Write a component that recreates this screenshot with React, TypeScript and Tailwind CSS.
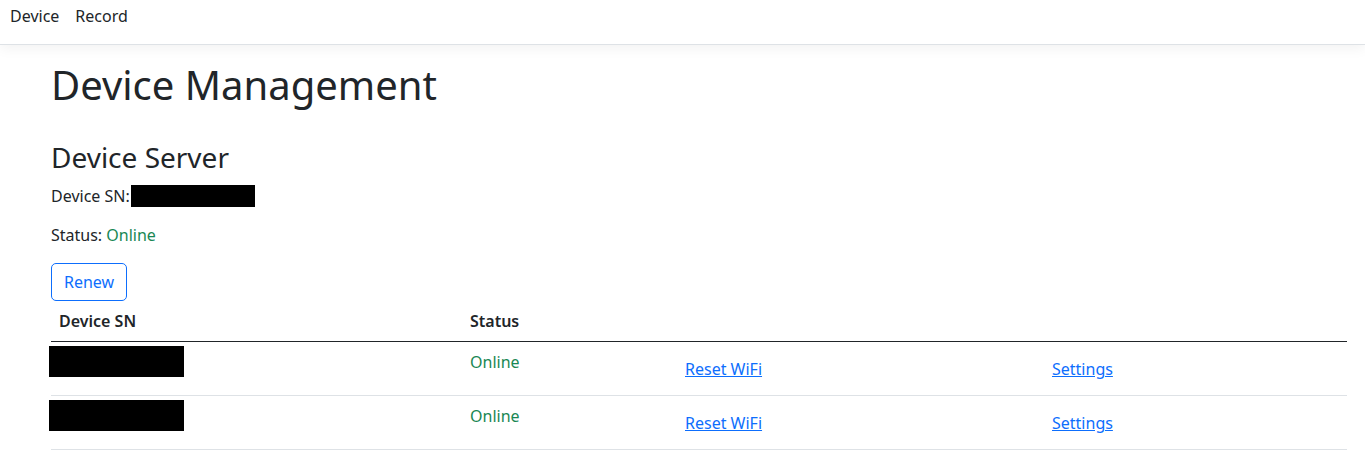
const font = { fontFamily: '"Noto Sans", "Open Sans", sans-serif' };

const rows = [0, 1];

export default function App() {
  return (
    <div className="min-h-[471px] bg-white text-[#212529]" style={font}>
      {/* Navbar */}
      <nav className="h-[45px] border-b border-[#dee2e6] bg-white shadow-[0_4px_12px_rgba(0,0,0,0.05)]">
        <div className="flex h-[32px] items-center gap-4 pl-[10px] text-[16px]">
          <a className="text-[#212529]">Device</a>
          <a className="text-[#212529]">Record</a>
        </div>
      </nav>

      <main className="pl-[51px] pr-[18px]">
        <h1 className="mt-[16px] text-[40px] leading-[48px] font-normal">Device Management</h1>

        <h3 className="mt-[31px] text-[28px] leading-[34px] font-normal">Device Server</h3>

        <div className="mt-[10px] flex items-center text-[16px] leading-6">
          <span>Device SN:</span>
          <span className="ml-[1px] inline-block h-[22px] w-[124px] bg-black" />
        </div>

        <p className="mt-[15px] text-[16px] leading-6">
          Status: <span className="text-[#198754]">Online</span>
        </p>

        <button className="mt-[16px] h-[38px] rounded-[5px] border border-[#0d6efd] px-[12px] text-[16px] text-[#0d6efd]">
          Renew
        </button>

        <table className="w-full border-collapse text-[16px] leading-6">
          <thead>
            <tr className="border-b border-[#212529]">
              <th className="w-[411px] px-2 py-2 text-left font-semibold">Device SN</th>
              <th className="w-[215px] px-2 py-2 text-left font-semibold">Status</th>
              <th className="w-[367px] px-2 py-2" />
              <th className="px-2 py-2" />
            </tr>
          </thead>
          <tbody>
            {rows.map((r) => (
              <tr key={r} className="border-b border-[#dee2e6]">
                <td className="h-[54px] align-top pt-[4px] pl-0">
                  <div className="-ml-[2px] h-[31px] w-[135px] bg-black" />
                </td>
                <td className="align-top px-2 pt-2 text-[#198754]">Online</td>
                <td className="align-top px-2 pt-[15px]">
                  <a className="text-[#0d6efd] underline">Reset WiFi</a>
                </td>
                <td className="align-top px-2 pt-[15px]">
                  <a className="text-[#0d6efd] underline">Settings</a>
                </td>
              </tr>
            ))}
          </tbody>
        </table>
      </main>
    </div>
  );
}
